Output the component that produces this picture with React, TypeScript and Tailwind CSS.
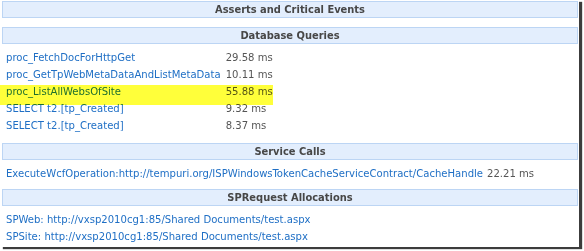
import React from "react";

const Header = ({ title }: { title: string }) => (
  <div className="h-[17px] border border-[#bcd5f4] bg-[#e3eefd] flex items-center justify-center text-[11px] font-bold text-[#474747] leading-none">
    {title}
  </div>
);

const dbRows: [string, string, boolean][] = [
  ["proc_FetchDocForHttpGet", "29.58 ms", false],
  ["proc_GetTpWebMetaDataAndListMetaData", "10.11 ms", false],
  ["proc_ListAllWebsOfSite", "55.88 ms", true],
  ["SELECT t2.[tp_Created]", "9.32 ms", false],
  ["SELECT t2.[tp_Created]", "8.37 ms", false],
];

export default function App() {
  return (
    <div className="w-[584px] h-[251px] bg-white">
      <div
        className="w-[579px] h-[247px] bg-white pl-[2px] pr-[1px] pt-[1px] shadow-[3px_2px_1px_#3c3c3c] font-['DejaVu_Sans_Condensed','DejaVu_Sans',sans-serif] text-[11.2px]"
      >
        <Header title="Asserts and Critical Events" />
        <div className="h-[9px]" />
        <Header title="Database Queries" />
        <div className="relative pt-[6px] pb-[8px]">
          <div className="grid grid-cols-[auto_1fr] pl-[4px]">
            {dbRows.map(([name, val], i) => (
              <React.Fragment key={i}>
                <div className="h-[17px] flex items-center text-[#1f6fc5] whitespace-nowrap pr-[5px]">
                  {name}
                </div>
                <div className="h-[17px] flex items-center text-[#555]">{val}</div>
              </React.Fragment>
            ))}
          </div>
          <div className="absolute left-[-2px] top-[41px] w-[273px] h-[20px] bg-[#ffff3a] mix-blend-multiply" />
        </div>
        <Header title="Service Calls" />
        <div className="pt-[6px] pb-[6px] pl-[4px]">
          <div className="h-[17px] flex items-center whitespace-nowrap">
            <span className="text-[#1f6fc5]">
              ExecuteWcfOperation:http://tempuri.org/ISPWindowsTokenCacheServiceContract/CacheHandle
            </span>
            <span className="text-[#555] ml-[4px]">22.21 ms</span>
          </div>
        </div>
        <Header title="SPRequest Allocations" />
        <div className="pt-[6px] pl-[4px] text-[#1f6fc5]">
          <div className="h-[17px] flex items-center whitespace-nowrap">
            SPWeb: http://vxsp2010cg1:85/Shared Documents/test.aspx
          </div>
          <div className="h-[17px] flex items-center whitespace-nowrap">
            SPSite: http://vxsp2010cg1:85/Shared Documents/test.aspx
          </div>
        </div>
      </div>
    </div>
  );
}
